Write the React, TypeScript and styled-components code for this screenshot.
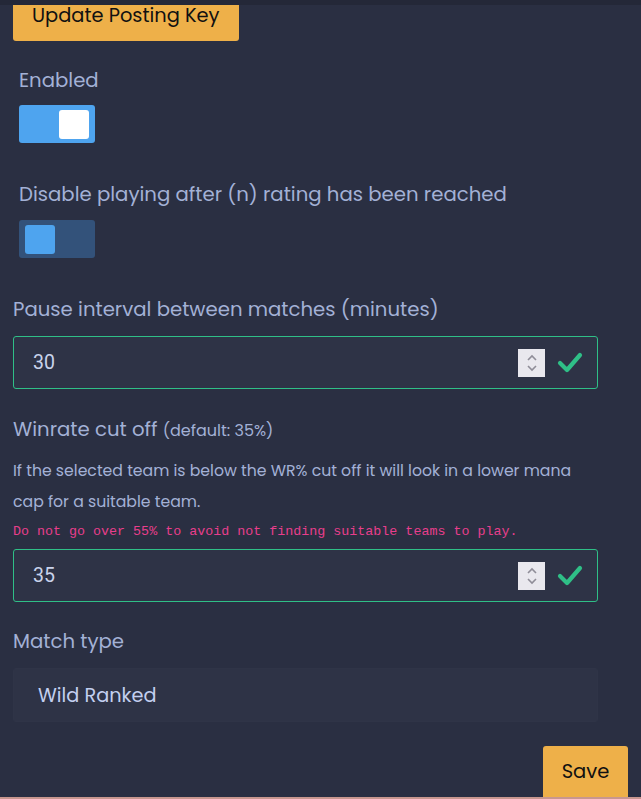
import React from "react";
import styled, { createGlobalStyle } from "styled-components";

const Global = createGlobalStyle`
  html, body { margin: 0; padding: 0; background: #2a2f42; }
  body { font-family: "Poppins", "Open Sans", "Noto Sans", sans-serif; overflow: hidden; }
  * { box-sizing: border-box; }
`;

const TopStrip = styled.div`
  position: fixed;
  top: 0; left: 0; right: 0;
  height: 5px;
  background: #242838;
  z-index: 2;
`;

const Page = styled.div`
  position: relative;
  width: 641px;
  height: 799px;
  overflow: hidden;
  background: #2a2f42;
  border-bottom: 2px solid #c8978f;
`;

const Content = styled.div`
  display: flex;
  flex-direction: column;
  padding: 0 43px 0 13px;
`;

const OrangeButton = styled.button`
  align-self: flex-start;
  background: #eeb049;
  color: #111;
  border: none;
  border-radius: 3px;
  font-family: inherit;
  font-size: 19.4px;
  padding: 0 19px;
  height: 52px;
  margin-top: -11px;
  cursor: pointer;
`;

const Label = styled.div<{ $indent?: boolean; $top: number }>`
  color: #a3b1d6;
  font-size: 19.7px;
  line-height: 28px;
  margin-top: ${(p) => p.$top}px;
  padding-left: ${(p) => (p.$indent ? 6 : 0)}px;
`;

const Small = styled.span`
  font-size: 16px;
`;

const Toggle = styled.div<{ $on: boolean; $top: number }>`
  margin-left: 6px;
  margin-top: ${(p) => p.$top}px;
  width: 76px;
  height: 38px;
  border-radius: 3px;
  background: ${(p) => (p.$on ? "#4ea4ef" : "#33527a")};
  display: flex;
  align-items: center;
  justify-content: ${(p) => (p.$on ? "flex-end" : "flex-start")};
  padding: 0 6px;
`;

const Knob = styled.div<{ $on: boolean }>`
  width: 30px;
  height: 29px;
  border-radius: 3px;
  background: ${(p) => (p.$on ? "#ffffff" : "#4ea4ef")};
`;

const InputBox = styled.div<{ $top: number }>`
  margin-top: ${(p) => p.$top}px;
  height: 53px;
  border: 1px solid #2fbf87;
  border-radius: 3px;
  background: #2e3346;
  display: flex;
  align-items: center;
  padding: 0 14px 0 19px;
`;

const InputValue = styled.div`
  flex: 1;
  color: #c9d3ec;
  font-family: Roboto, "Liberation Sans", sans-serif;
  font-size: 19.5px;
`;

const Spinner = styled.div`
  width: 27px;
  height: 28px;
  background: #e9e8ee;
  display: flex;
  align-items: center;
  justify-content: center;
  margin-right: 12px;
`;

const Desc = styled.p`
  margin: 10px 0 0;
  color: #a3b1d6;
  font-size: 15.7px;
  line-height: 31px;
`;

const Code = styled.code`
  display: block;
  margin-top: 6px;
  color: #e83e8c;
  font-family: "Liberation Mono", "DejaVu Sans Mono", monospace;
  font-size: 13.35px;
  line-height: 18px;
`;

const SelectBox = styled.div`
  margin-top: 13px;
  height: 54px;
  border: 1px solid #2f3447;
  border-radius: 3px;
  background: #2e3346;
  display: flex;
  align-items: center;
  padding-left: 24px;
  color: #c3cff0;
  font-size: 19.3px;
`;

const Footer = styled.div`
  display: flex;
  justify-content: flex-end;
  margin-right: -30px;
  margin-top: 24px;
`;

const SaveButton = styled.button`
  background: #eeb049;
  color: #111;
  border: none;
  border-radius: 3px 3px 0 0;
  font-family: inherit;
  font-size: 19.5px;
  width: 85px;
  height: 54px;
  padding: 0 0 4px;
`;

const SpinIcon = () => (
  <svg width="14" height="22" viewBox="0 0 14 22">
    <path d="M3 8 L7 4 L11 8" fill="none" stroke="#8f8d98" strokeWidth="1.6" />
    <path d="M3 14 L7 18 L11 14" fill="none" stroke="#8f8d98" strokeWidth="1.6" />
  </svg>
);

const Check = () => (
  <svg width="26" height="22" viewBox="0 0 26 22">
    <path d="M3 11 L10 18 L23 3" fill="none" stroke="#2fbf87" strokeWidth="4.2" strokeLinecap="round" strokeLinejoin="round" />
  </svg>
);

const NumberInput = ({ value, top }: { value: string; top: number }) => (
  <InputBox $top={top}>
    <InputValue>{value}</InputValue>
    <Spinner>
      <SpinIcon />
    </Spinner>
    <Check />
  </InputBox>
);

export default function App() {
  return (
    <Page>
      <Global />
      <TopStrip />
      <Content>
        <OrangeButton>Update Posting Key</OrangeButton>
        <Label $indent $top={25}>Enabled</Label>
        <Toggle $on $top={11}>
          <Knob $on />
        </Toggle>
        <Label $indent $top={37}>Disable playing after (n) rating has been reached</Label>
        <Toggle $on={false} $top={12}>
          <Knob $on={false} />
        </Toggle>
        <Label $top={37}>Pause interval between matches (minutes)</Label>
        <NumberInput value="30" top={13} />
        <Label $top={26}>
          Winrate cut off <Small>(default: 35%)</Small>
        </Label>
        <Desc>
          If the selected team is below the WR% cut off it will look in a lower mana cap for a suitable team.
        </Desc>
        <Code>Do not go over 55% to avoid not finding suitable teams to play.</Code>
        <NumberInput value="35" top={8} />
        <Label $top={25}>Match type</Label>
        <SelectBox>Wild Ranked</SelectBox>
        <Footer>
          <SaveButton>Save</SaveButton>
        </Footer>
      </Content>
    </Page>
  );
}
